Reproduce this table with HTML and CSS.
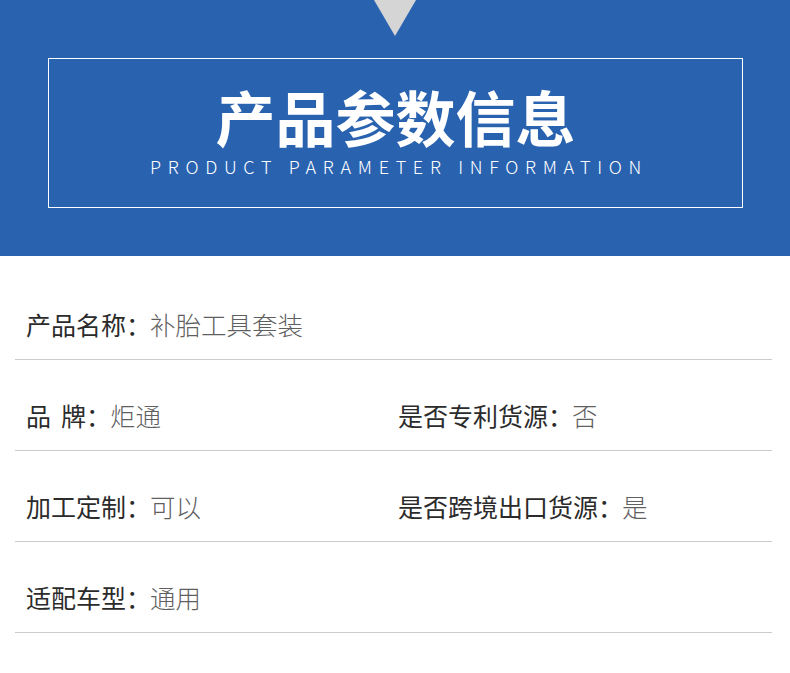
FILE: index.html
```html
<!DOCTYPE html>
<html lang="zh">
<head>
<meta charset="utf-8">
<link rel="stylesheet" href="styles.css">
</head>
<body>
<header class="banner">
  <div class="notch"></div>
  <div class="frame">
    <h1 class="title">产品参数信息</h1>
    <p class="subtitle">PRODUCT PARAMETER INFORMATION</p>
  </div>
</header>
<main class="params">
  <div class="row">
    <div class="cell"><span class="label">产品名称：</span><span class="value">补胎工具套装</span></div>
  </div>
  <div class="row">
    <div class="cell"><span class="label">品<span class="gap"></span>牌：</span><span class="value">炬通</span></div>
    <div class="cell"><span class="label">是否专利货源：</span><span class="value">否</span></div>
  </div>
  <div class="row">
    <div class="cell"><span class="label">加工定制：</span><span class="value">可以</span></div>
    <div class="cell"><span class="label">是否跨境出口货源：</span><span class="value">是</span></div>
  </div>
  <div class="row">
    <div class="cell"><span class="label">适配车型：</span><span class="value">通用</span></div>
  </div>
</main>
</body>
</html>
```
FILE: styles.css
```css
* { box-sizing: border-box; }
html, body { margin: 0; padding: 0; background: #fff; }
body {
  width: 790px;
  font-family: "Noto Sans CJK SC", "Noto Sans", sans-serif;
}
.banner {
  position: relative;
  height: 256px;
  background: #2963b0;
  padding-top: 58px;
}
.notch {
  position: absolute;
  left: 374px;
  top: 0;
  width: 0;
  height: 0;
  border-left: 21px solid transparent;
  border-right: 21px solid transparent;
  border-top: 36px solid #d5d5d5;
}
.frame {
  margin-left: 48px;
  width: 695px;
  height: 150px;
  border: 1px solid #fff;
  display: flex;
  flex-direction: column;
  align-items: center;
  color: #fff;
}
.title {
  margin: 22px 0 0;
  font-size: 60px;
  line-height: 70px;
  font-weight: 700;
  letter-spacing: 0;
}
.subtitle {
  margin: 3px 0 0;
  padding-left: 7px;
  font-size: 18px;
  line-height: 24px;
  font-weight: 300;
  letter-spacing: 6.7px;
}
.params {
  padding-top: 13px;
}
.row {
  margin: 0 18px 0 15px;
  height: 91px;
  padding: 38px 0 0 11px;
  border-bottom: 1px solid #cbcbcb;
  display: grid;
  grid-template-columns: 372px 1fr;
  font-size: 25px;
  line-height: 34px;
}
.label { color: #2b2b2b; }
.gap { display: inline-block; width: 10px; }
.value { color: #5f5f5f; font-weight: 300; font-size: 25.5px; margin-left: -1px; }
```
